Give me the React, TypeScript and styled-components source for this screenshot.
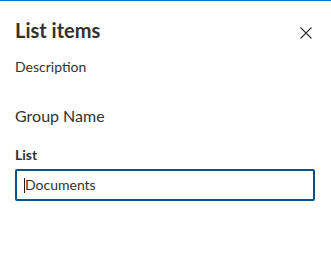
import * as React from 'react';
import styled, { createGlobalStyle } from 'styled-components';

const GlobalStyle = createGlobalStyle`
  html, body {
    margin: 0;
    padding: 0;
    background: #ffffff;
  }
  body {
    font-family: 'Segoe UI', Lato, 'Noto Sans', sans-serif;
    color: #323130;
    -webkit-font-smoothing: antialiased;
  }
`;

const Panel = styled.div`
  width: 331px;
  height: 255px;
  box-sizing: border-box;
  border-top: 1px solid #0078d4;
  padding: 16px 16px 0 15px;
  display: flex;
  flex-direction: column;
`;

const Header = styled.div`
  display: flex;
  align-items: flex-start;
  justify-content: space-between;
`;

const Title = styled.h2`
  margin: 0;
  font-size: 20px;
  line-height: 27px;
  font-weight: 700;
`;

const CloseButton = styled.button`
  width: 14px;
  height: 14px;
  margin: 9px 2px 0 0;
  padding: 0;
  border: none;
  background: transparent;
  display: flex;
  align-items: center;
  justify-content: center;
  color: #323130;
  cursor: pointer;
`;

const Description = styled.p`
  margin: 13px 0 0 0;
  font-size: 14px;
  line-height: 20px;
`;

const GroupName = styled.div`
  margin-top: 28px;
  font-size: 16px;
  line-height: 22px;
`;

const Label = styled.label`
  margin-top: 18px;
  font-size: 14px;
  line-height: 20px;
  font-weight: 700;
`;

const Field = styled.div`
  margin-top: 4px;
  width: 300px;
  height: 32px;
  box-sizing: border-box;
  border: 2px solid #005291;
  border-radius: 2px;
  padding: 0 7px;
  display: flex;
  align-items: center;
  font-size: 14px;
  line-height: 28px;
`;

const Caret = styled.span`
  display: inline-block;
  width: 1px;
  height: 15px;
  background: #201f1e;
  margin: 1px 0 0 0;
`;

const Value = styled.span`
  margin-left: 0;
`;

const App: React.FC = () => {
  return (
    <>
      <GlobalStyle />
      <Panel>
        <Header>
          <Title>List items</Title>
          <CloseButton aria-label="Close">
            <svg width="12" height="12" viewBox="0 0 12 12">
              <path d="M0.5 0.5 L11.5 11.5 M11.5 0.5 L0.5 11.5" stroke="currentColor" strokeWidth="1.1" fill="none" />
            </svg>
          </CloseButton>
        </Header>
        <Description>Description</Description>
        <GroupName>Group Name</GroupName>
        <Label>List</Label>
        <Field>
          <Caret />
          <Value>Documents</Value>
        </Field>
      </Panel>
    </>
  );
};

export default App;
